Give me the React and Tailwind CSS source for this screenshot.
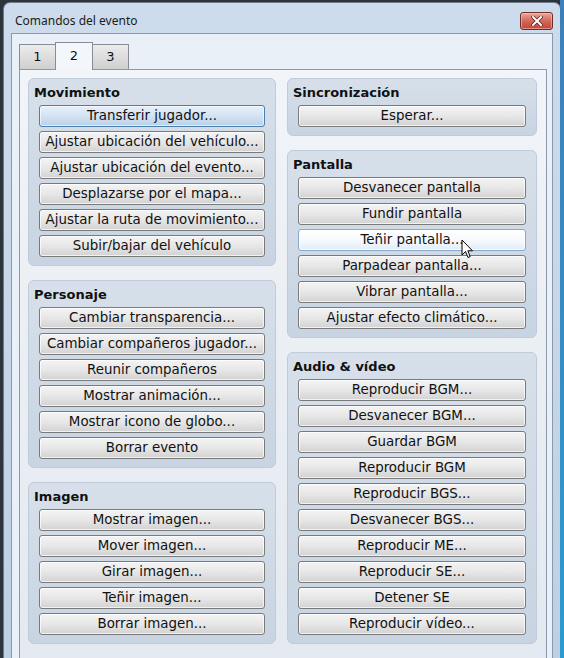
import React from 'react';

const groupsLeft = [
  {
    title: 'Movimiento',
    items: [
      'Transferir jugador...',
      'Ajustar ubicación del vehículo...',
      'Ajustar ubicación del evento...',
      'Desplazarse por el mapa...',
      'Ajustar la ruta de movimiento...',
      'Subir/bajar del vehículo',
    ],
  },
  {
    title: 'Personaje',
    items: [
      'Cambiar transparencia...',
      'Cambiar compañeros jugador...',
      'Reunir compañeros',
      'Mostrar animación...',
      'Mostrar icono de globo...',
      'Borrar evento',
    ],
  },
  {
    title: 'Imagen',
    items: ['Mostrar imagen...', 'Mover imagen...', 'Girar imagen...', 'Teñir imagen...', 'Borrar imagen...'],
  },
];

const groupsRight = [
  { title: 'Sincronización', items: ['Esperar...'] },
  {
    title: 'Pantalla',
    items: [
      'Desvanecer pantalla',
      'Fundir pantalla',
      'Teñir pantalla...',
      'Parpadear pantalla...',
      'Vibrar pantalla...',
      'Ajustar efecto climático...',
    ],
  },
  {
    title: 'Audio & vídeo',
    items: [
      'Reproducir BGM...',
      'Desvanecer BGM...',
      'Guardar BGM',
      'Reproducir BGM',
      'Reproducir BGS...',
      'Desvanecer BGS...',
      'Reproducir ME...',
      'Reproducir SE...',
      'Detener SE',
      'Reproducir vídeo...',
    ],
  },
];

const CmdButton = ({ label, state }) => {
  let look =
    'border-[#7a7a7a] bg-gradient-to-b from-[#f4f4f4] via-[#e7e7e7] to-[#d2d2d2] shadow-[inset_0_0_0_1px_rgba(255,255,255,0.7)]';
  if (state === 'focus')
    look =
      'border-[#4a7fae] bg-gradient-to-b from-[#e6f0fa] via-[#d3e3f3] to-[#b9d0e8] shadow-[inset_0_0_0_1px_rgba(255,255,255,0.6)]';
  if (state === 'hover')
    look =
      'border-[#8aa8c8] bg-gradient-to-b from-[#ffffff] via-[#f6fafe] to-[#e1ecf7] shadow-[inset_0_0_0_1px_rgba(255,255,255,0.8)]';
  return (
    <div
      className={`h-[22px] rounded-[3px] border flex items-center justify-center text-[13.4px] text-[#111] whitespace-nowrap ${look}`}
    >
      {label}
    </div>
  );
};

const Group = ({ title, items }) => (
  <div className="rounded-[6px] border border-[#bfcbd9] bg-gradient-to-b from-[#d7e0ea] to-[#c8d4e2] pt-[4px] pb-[8px] pl-[10px] pr-[10px]">
    <div className="h-[19px] -ml-[5px] text-[13px] font-bold text-[#111] leading-[19px]">{title}</div>
    <div className="mt-[3px] flex flex-col gap-[4px]">
      {items.map((it) => (
        <CmdButton
          key={it}
          label={it}
          state={it === 'Transferir jugador...' ? 'focus' : it === 'Teñir pantalla...' ? 'hover' : undefined}
        />
      ))}
    </div>
  </div>
);

export default function App() {
  return (
    <div
      className="relative w-[564px] h-[658px] overflow-hidden bg-[#2e343b] pl-[3px] pt-[2px]"
      style={{ fontFamily: '"DejaVu Sans", Verdana, sans-serif' }}
    >
      <div className="absolute right-0 top-0 h-full w-[4px] bg-gradient-to-b from-[#3d7fb8] to-[#2a9ad0]" />
      <div className="w-[558px] h-[700px] rounded-t-[7px] border border-[#6d7b8b] bg-gradient-to-b from-[#cddcec] via-[#c6d6e8] to-[#bccfe3] flex flex-col">
        <div className="h-[30px] flex items-center justify-between pl-[11px] pr-[7px] shrink-0">
          <span
            className="text-[12px] text-[#1b1b1b] mt-[6px]"
            style={{ fontFamily: '"Noto Sans", "Open Sans", sans-serif' }}
          >
            Comandos del evento
          </span>
          <div className="mt-[5px] w-[33px] h-[18px] rounded-[3px] border border-[#6f2f28] bg-gradient-to-b from-[#e7a89c] via-[#d2675a] to-[#c2463a] flex items-center justify-center shadow-[inset_0_0_0_1px_rgba(255,210,200,0.5)]">
            <svg width="12" height="10" viewBox="0 0 12 10">
              <path d="M2 1 L10 9 M10 1 L2 9" stroke="#5a2018" strokeWidth="3.4" strokeLinecap="square" />
              <path d="M2 1 L10 9 M10 1 L2 9" stroke="#ffffff" strokeWidth="2" strokeLinecap="square" />
            </svg>
          </div>
        </div>
        <div className="ml-[7px] mr-[7px] flex-1 border border-[#8a99ab] border-b-0 bg-[#eaf0f7] pl-[7px] pr-[5px] pt-[8px]">
          <div className="flex items-end h-[27px]">
            <div className="w-[37px] h-[25px] border border-[#898c95] border-b-0 bg-gradient-to-b from-[#ececec] to-[#cfcfcf] flex items-center justify-center text-[13px] text-[#111]">
              1
            </div>
            <div className="relative z-10 -mb-px -ml-px w-[38px] h-[28px] border border-[#898c95] border-b-0 bg-[#f3f6fa] flex items-center justify-center text-[13px] text-[#111] pb-[2px]">
              2
            </div>
            <div className="w-[36px] h-[25px] border border-l-0 border-[#898c95] border-b-0 bg-gradient-to-b from-[#ececec] to-[#cfcfcf] flex items-center justify-center text-[13px] text-[#111]">
              3
            </div>
          </div>
          <div className="h-[620px] border border-[#8a99ab] border-b-0 bg-gradient-to-b from-[#f1f4f8] to-[#e3e9f0] pl-[8px] pr-[10px] pt-[8px] grid grid-cols-[248px_250px] gap-x-[11px] items-start">
            <div className="flex flex-col gap-[14px]">
              {groupsLeft.map((g) => (
                <Group key={g.title} {...g} />
              ))}
            </div>
            <div className="flex flex-col gap-[14px]">
              {groupsRight.map((g) => (
                <Group key={g.title} {...g} />
              ))}
            </div>
          </div>
        </div>
      </div>
      <svg className="absolute left-[461px] top-[239px]" width="13" height="20" viewBox="0 0 13 20">
        <path
          d="M1 1 L1 16 L4.5 12.5 L7 18.5 L9.2 17.6 L6.8 11.8 L11.5 11.8 Z"
          fill="#ffffff"
          stroke="#000000"
          strokeWidth="1"
          strokeLinejoin="round"
        />
      </svg>
    </div>
  );
}
